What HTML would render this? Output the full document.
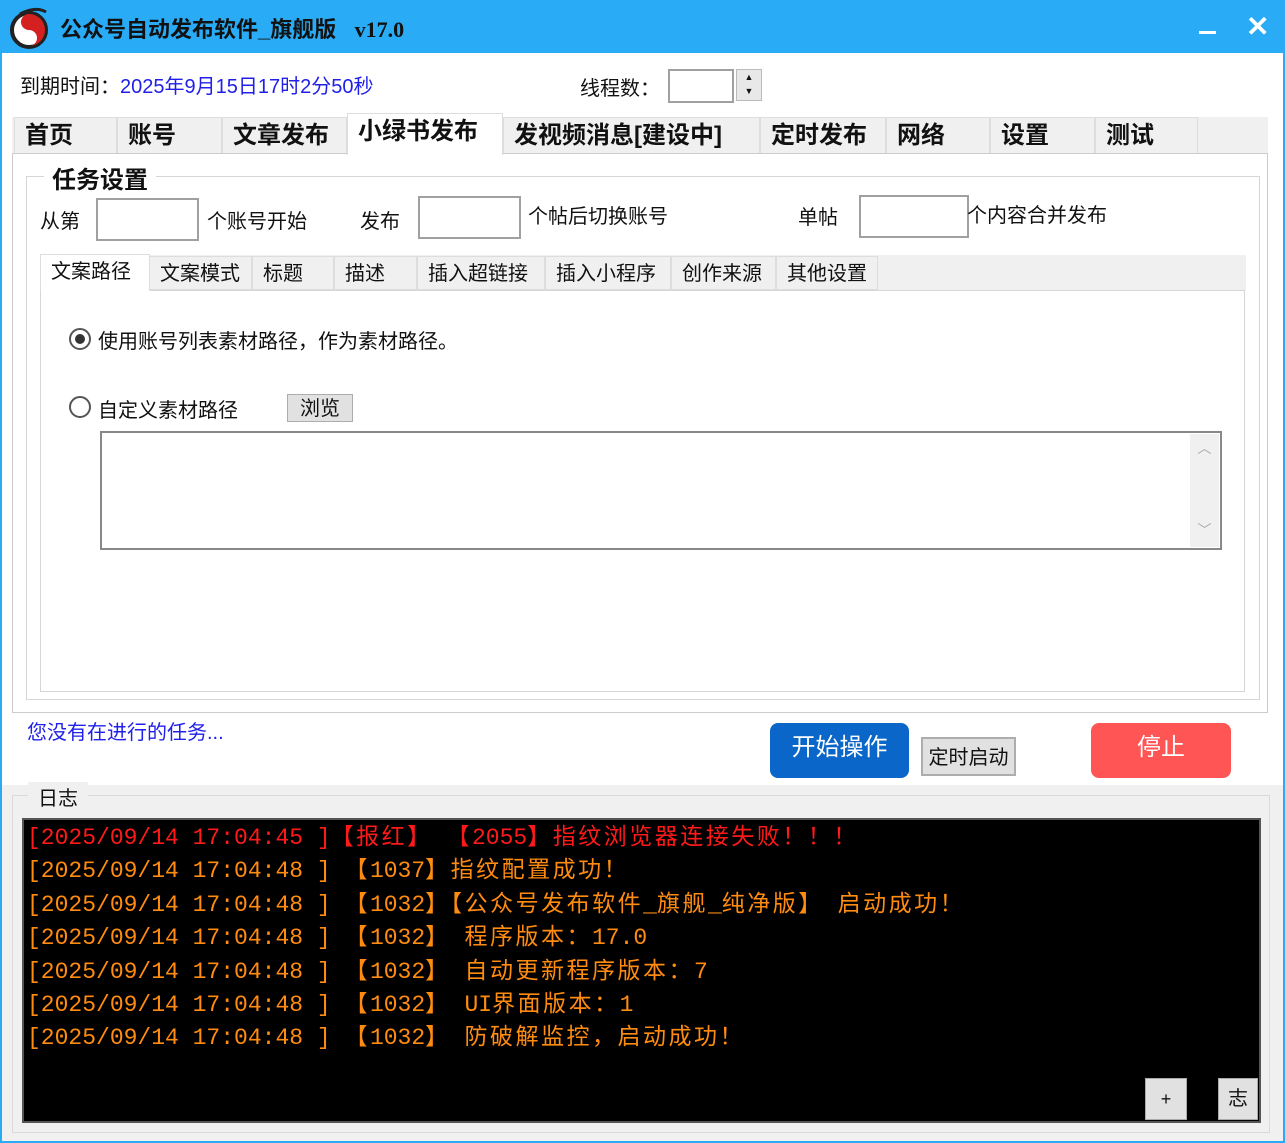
<!DOCTYPE html>
<html><head><meta charset="utf-8">
<style>
*{margin:0;padding:0;box-sizing:border-box}
body{width:1285px;height:1143px;position:relative;background:#fff;font-family:"Liberation Sans","Noto Sans CJK SC",sans-serif;color:#111;overflow:hidden}
.a{position:absolute}
.tb{left:0;top:0;width:1285px;height:53px;background:#29abf5}
.win{left:0;top:53px;width:1285px;height:1090px;border:2px solid #29abf5;border-top:none}
.t{font-size:20px;white-space:nowrap}
.mt{top:117px;height:36px;background:#f0f0f0;border:1px solid #ddd;border-bottom:none;font-weight:bold;font-size:24px;line-height:36px;padding-left:10px}
.it{top:256px;height:34px;background:#f0f0f0;border:1px solid #ddd;font-size:20px;line-height:34px;padding-left:10px}
.inp{background:#fff;border:2px solid #a0a0a0}
.log{font-family:"Liberation Mono","Noto Sans CJK SC",monospace;font-size:23px;white-space:pre;line-height:33.4px}
.c{letter-spacing:2.5px}
</style></head><body>
<div class="a tb"></div>
<svg class="a" style="left:6px;top:6px" width="46" height="44" viewBox="0 0 46 44">
<circle cx="23" cy="24" r="17" fill="#fff" stroke="#222" stroke-width="4"/>
<path d="M23 8 A16 16 0 0 1 23 40 A8 8 0 0 0 23 24 A8 8 0 0 1 23 8Z" fill="#d42020"/>
<path d="M14 8 Q30 0 40 6" stroke="#222" stroke-width="3" fill="none"/>
</svg>
<div class="a t" style="left:60px;top:12px;font-weight:bold;font-size:22px">公众号自动发布软件_旗舰版 &nbsp; <span style="font-family:'Liberation Serif',serif">v17.0</span></div>
<div class="a" style="left:1199px;top:31px;width:17px;height:3px;background:#fff"></div>
<div class="a" style="left:1246px;top:10px;color:#fff;font-size:28px;font-weight:bold">✕</div>
<div class="a win"></div>

<div class="a t" style="left:20px;top:70px">到期时间：<span style="color:#2020e8">2025年9月15日17时2分50秒</span></div>
<div class="a t" style="left:580px;top:72px">线程数：</div>
<div class="a inp" style="left:668px;top:69px;width:66px;height:34px"></div>
<div class="a" style="left:736px;top:69px;width:26px;height:32px;background:#e8e8e8;border:1px solid #bbb;font-size:9px;text-align:center;line-height:14px">▲<br>▼</div>

<div class="a" style="left:12px;top:117px;width:1256px;height:36px;background:#f0f0f0"></div>
<div class="a mt" style="left:14px;width:103px">首页</div>
<div class="a mt" style="left:117px;width:105px">账号</div>
<div class="a mt" style="left:222px;width:125px">文章发布</div>
<div class="a mt" style="left:347px;width:156px;top:113px;height:42px;background:#fff;z-index:2">小绿书发布</div>
<div class="a mt" style="left:503px;width:257px">发视频消息[建设中]</div>
<div class="a mt" style="left:760px;width:126px">定时发布</div>
<div class="a mt" style="left:886px;width:104px">网络</div>
<div class="a mt" style="left:990px;width:105px">设置</div>
<div class="a mt" style="left:1095px;width:103px">测试</div>
<div class="a" style="left:12px;top:153px;width:1256px;height:560px;border:1px solid #ccc;background:#fff"></div>
<div class="a" style="left:26px;top:176px;width:1234px;height:524px;border:1px solid #d6d6d6"></div>
<div class="a" style="left:44px;top:160px;background:#fff;padding:0 8px;font-size:24px;font-weight:bold">任务设置</div>

<div class="a t" style="left:40px;top:205px">从第</div>
<div class="a inp" style="left:96px;top:198px;width:103px;height:43px"></div>
<div class="a t" style="left:207px;top:205px">个账号开始</div>
<div class="a t" style="left:360px;top:205px">发布</div>
<div class="a inp" style="left:418px;top:196px;width:103px;height:43px"></div>
<div class="a t" style="left:528px;top:200px">个帖后切换账号</div>
<div class="a t" style="left:798px;top:201px">单帖</div>
<div class="a inp" style="left:859px;top:195px;width:110px;height:43px"></div>
<div class="a t" style="left:967px;top:199px">个内容合并发布</div>

<div class="a" style="left:40px;top:255px;width:1206px;height:36px;background:#f0f0f0"></div>
<div class="a" style="left:40px;top:290px;width:1205px;height:402px;border:1px solid #d6d6d6;background:#fff"></div>
<div class="a it" style="left:40px;width:110px;top:254px;height:37px;background:#fff;border-bottom:none;z-index:2">文案路径</div>
<div class="a it" style="left:149px;width:103px">文案模式</div>
<div class="a it" style="left:252px;width:82px">标题</div>
<div class="a it" style="left:334px;width:83px">描述</div>
<div class="a it" style="left:417px;width:128px">插入超链接</div>
<div class="a it" style="left:545px;width:126px">插入小程序</div>
<div class="a it" style="left:671px;width:105px">创作来源</div>
<div class="a it" style="left:776px;width:102px">其他设置</div>

<div class="a" style="left:69px;top:328px;width:22px;height:22px;border:2px solid #555;border-radius:50%;background:#fff"></div>
<div class="a" style="left:75px;top:334px;width:10px;height:10px;border-radius:50%;background:#333"></div>
<div class="a t" style="left:98px;top:325px">使用账号列表素材路径，作为素材路径。</div>
<div class="a" style="left:69px;top:396px;width:22px;height:22px;border:2px solid #555;border-radius:50%;background:#fff"></div>
<div class="a t" style="left:98px;top:394px">自定义素材路径</div>
<div class="a" style="left:287px;top:394px;width:66px;height:28px;background:#e1e1e1;border:1px solid #adadad;font-size:20px;text-align:center;line-height:28px">浏览</div>
<div class="a" style="left:100px;top:431px;width:1122px;height:119px;border:2px solid #888;background:#fff"></div>
<div class="a" style="left:1190px;top:434px;width:29px;height:113px;background:#f0f0f0;color:#aaa;font-size:14px;text-align:center;padding-top:4px">︿<div style="margin-top:62px">﹀</div></div>

<div class="a t" style="left:27px;top:716px;color:#2020e8">您没有在进行的任务...</div>
<div class="a" style="left:770px;top:723px;width:139px;height:55px;background:#0a67c9;border-radius:8px;color:#fff;font-size:24px;text-align:center;line-height:50px">开始操作</div>
<div class="a" style="left:921px;top:737px;width:95px;height:39px;background:#e1e1e1;border:2px solid #adadad;font-size:20px;text-align:center;line-height:38px">定时启动</div>
<div class="a" style="left:1091px;top:723px;width:140px;height:55px;background:#ff5555;border-radius:8px;color:#fff;font-size:24px;text-align:center;line-height:50px">停止</div>

<div class="a" style="left:2px;top:785px;width:1281px;height:356px;background:#f0f0f0"></div>
<div class="a" style="left:12px;top:795px;width:1258px;height:338px;border:1px solid #dadada"></div>
<div class="a" style="left:28px;top:782px;padding:0 10px;background:#f0f0f0;font-size:20px">日志</div>
<div class="a" style="left:22px;top:818px;width:1239px;height:305px;background:#000;border:2px solid #555"></div>
<div class="a log" style="left:27px;top:822px"><span style="color:#ff1a1a">[2025/09/14 17:04:45 ]<span class="c">【报红】</span> <span class="c">【</span>2055<span class="c">】指纹浏览器连接失败！！！</span></span>
<span style="color:#ff8c10">[2025/09/14 17:04:48 ] <span class="c">【</span>1037<span class="c">】指纹配置成功！</span>
[2025/09/14 17:04:48 ] <span class="c">【</span>1032<span class="c">】【公众号发布软件</span>_<span class="c">旗舰</span>_<span class="c">纯净版】</span> <span class="c">启动成功！</span>
[2025/09/14 17:04:48 ] <span class="c">【</span>1032<span class="c">】</span> <span class="c">程序版本：</span>17.0
[2025/09/14 17:04:48 ] <span class="c">【</span>1032<span class="c">】</span> <span class="c">自动更新程序版本：</span>7
[2025/09/14 17:04:48 ] <span class="c">【</span>1032<span class="c">】</span> UI<span class="c">界面版本：</span>1
[2025/09/14 17:04:48 ] <span class="c">【</span>1032<span class="c">】</span> <span class="c">防破解监控，启动成功！</span></span></div>
<div class="a" style="left:1145px;top:1078px;width:42px;height:42px;background:#e1e1e1;border:1px solid #aaa;text-align:center;line-height:40px;font-size:18px">+</div>
<div class="a" style="left:1218px;top:1078px;width:40px;height:42px;background:#e1e1e1;border:1px solid #aaa;text-align:center;line-height:40px;font-size:20px">志</div>
</body></html>
